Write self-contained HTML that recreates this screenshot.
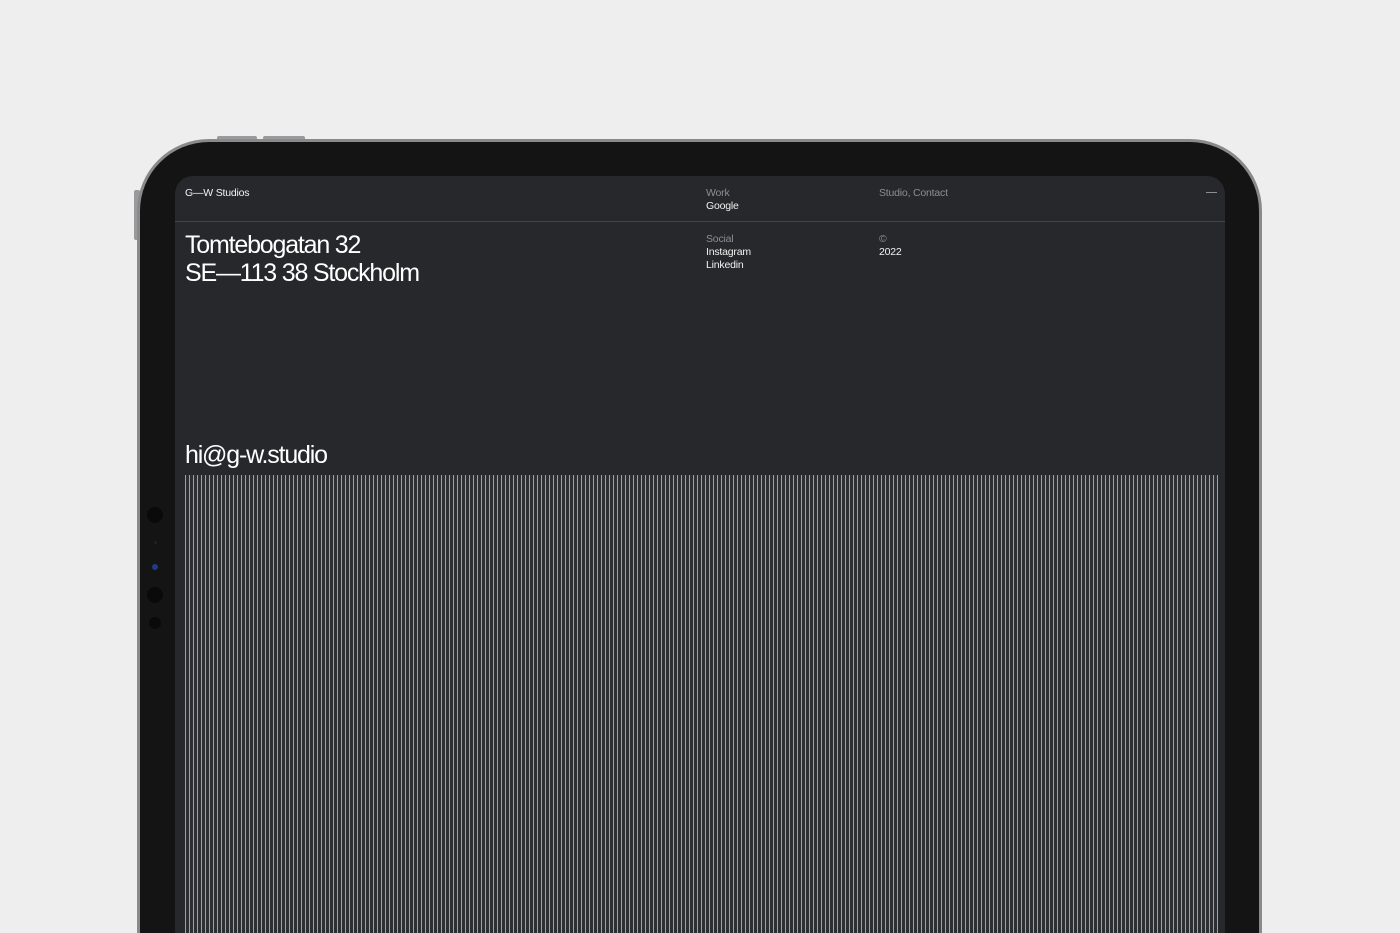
<!DOCTYPE html>
<html style="overflow:hidden;height:933px"><head><style>
*{margin:0;padding:0;box-sizing:border-box}
body{width:1400px;height:933px;background:#eeeeee;position:relative;overflow:hidden;font-family:"Liberation Sans",sans-serif}
.btn{position:absolute;background:#9a9a9c;border-radius:2px}
.frame{position:absolute;left:137px;top:139px;width:1125px;height:794px;border-radius:72px 72px 0 0;background:#8a8a8d;}
.bezel{position:absolute;left:140px;top:142px;width:1119px;height:791px;border-radius:69px 69px 0 0;background:#141414;}
.screen{position:absolute;left:175px;top:176px;width:1050px;height:757px;border-radius:18px 18px 0 0;background:#27282c;overflow:hidden}
.t{position:absolute;color:#f2f2f2;font-size:10.5px;line-height:12.5px;letter-spacing:-0.2px}
.g{color:#8d8e92}
.big{position:absolute;color:#fff;font-size:25px;line-height:28px;letter-spacing:-1.2px}
.sep{position:absolute;left:0;right:0;top:45px;height:1px;background:#43444a}
.lines{position:absolute;left:10px;top:299px;width:1033px;height:458px;background:repeating-linear-gradient(90deg,#9fa0a4 0 1px,#2e2f33 1px 4px)}
.dot{position:absolute;border-radius:50%;background:#0a0a0a}
</style></head><body>
<div class="btn" style="left:217px;top:136px;width:40px;height:6px"></div>
<div class="btn" style="left:263px;top:136px;width:42px;height:6px"></div>
<div class="btn" style="left:134px;top:190px;width:6px;height:50px"></div>
<div class="frame"></div>
<div class="bezel"></div>
<div class="dot" style="left:147px;top:507px;width:16px;height:16px"></div>
<div class="dot" style="left:154px;top:541px;width:3px;height:3px;background:#222"></div>
<div class="dot" style="left:152px;top:564px;width:6px;height:6px;background:#1f3a8a"></div>
<div class="dot" style="left:147px;top:587px;width:16px;height:16px"></div>
<div class="dot" style="left:149px;top:617px;width:12px;height:12px"></div>
<div class="screen">
  <div class="t" style="left:10px;top:11px">G—W Studios</div>
  <div class="t g" style="left:531px;top:11px">Work</div>
  <div class="t" style="left:531px;top:24px">Google</div>
  <div class="t g" style="left:704px;top:11px">Studio, Contact</div>
  <div style="position:absolute;left:1031px;top:16px;width:11px;height:1px;background:#8d8e92"></div>
  <div class="sep"></div>
  <div class="big" style="left:10px;top:55px">Tomtebogatan 32<br>SE—113 38 Stockholm</div>
  <div class="t g" style="left:531px;top:57px">Social</div>
  <div class="t" style="left:531px;top:70px">Instagram<br>Linkedin</div>
  <div class="t g" style="left:704px;top:57px">©</div>
  <div class="t" style="left:704px;top:70px">2022</div>
  <div class="big" style="left:10px;top:265px">hi@g-w.studio</div>
  <div class="lines"></div>
</div>
</body></html>
